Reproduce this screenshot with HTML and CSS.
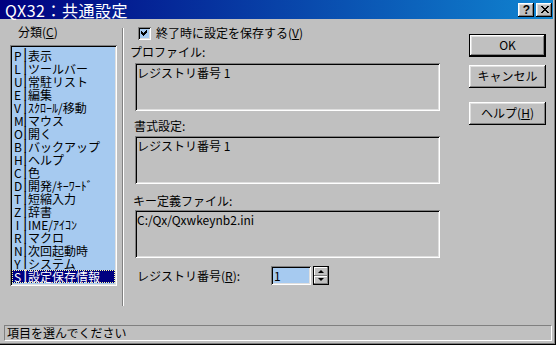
FILE: index.html
```html
<!DOCTYPE html>
<html lang="ja">
<head>
    <meta charset="utf-8">
    <title>QX32：共通設定</title>
    <link rel="stylesheet" href="styles.css">
</head>
<body>
    <div class="window">
        <div class="titlebar">
            <span class="title">QX32：共通設定</span>
            <div class="title-buttons">
                <span class="tbtn help-btn">?</span>
                <span class="tbtn close-btn">
                    <svg width="8" height="7" viewBox="0 0 8 7"><path d="M0 0h2v1h1v1h2v-1h1v-1h2v1h-1v1h-1v1h-1v1h1v1h1v1h1v1h-2v-1h-1v-1h-2v1h-1v1h-2v-1h1v-1h1v-1h1v-1h-1v-1h-1v-1h-1z" fill="#000"/></svg>
                </span>
            </div>
        </div>

        <div class="content">
            <div class="category">
                <div class="cat-label">分類(<u>C</u>)</div>
                <ul class="cat-list">
                    <li><span class="key">P</span><span class="bar">|</span>表示</li>
                    <li><span class="key">L</span><span class="bar">|</span>ツールバー</li>
                    <li><span class="key">U</span><span class="bar">|</span>常駐リスト</li>
                    <li><span class="key">E</span><span class="bar">|</span>編集</li>
                    <li><span class="key">V</span><span class="bar">|</span>ｽｸﾛｰﾙ/移動</li>
                    <li><span class="key">M</span><span class="bar">|</span>マウス</li>
                    <li><span class="key">O</span><span class="bar">|</span>開く</li>
                    <li><span class="key">B</span><span class="bar">|</span>バックアップ</li>
                    <li><span class="key">H</span><span class="bar">|</span>ヘルプ</li>
                    <li><span class="key">C</span><span class="bar">|</span>色</li>
                    <li><span class="key">D</span><span class="bar">|</span>開発/ｷｰﾜｰﾄﾞ</li>
                    <li><span class="key">T</span><span class="bar">|</span>短縮入力</li>
                    <li><span class="key">Z</span><span class="bar">|</span>辞書</li>
                    <li><span class="key">I</span><span class="bar">|</span>IME/ｱｲｺﾝ</li>
                    <li><span class="key">R</span><span class="bar">|</span>マクロ</li>
                    <li><span class="key">N</span><span class="bar">|</span>次回起動時</li>
                    <li><span class="key">Y</span><span class="bar">|</span>システム</li>
                    <li class="selected"><span class="key">S</span><span class="bar">|</span>設定保存情報</li>
                </ul>
            </div>

            <div class="divider"></div>

            <div class="settings">
                <div class="check-row">
                    <span class="checkbox">
                        <svg width="7" height="7" viewBox="0 0 7 7"><path d="M6 0v3h-1v1h-1v1h-1v1h-1v-1h-1v-1h-1v-3h1v1h1v1h1v-1h1v-1h1v-1z" fill="#000"/></svg>
                    </span>
                    <span>終了時に設定を保存する(<u>V</u>)</span>
                </div>

                <div class="field-label first">プロファイル:</div>
                <div class="field">レジストリ番号 1</div>

                <div class="field-label second">書式設定:</div>
                <div class="field">レジストリ番号 1</div>

                <div class="field-label third">キー定義ファイル:</div>
                <div class="field">C:/Qx/Qxwkeynb2.ini</div>

                <div class="registry-row">
                    <span class="registry-label">レジストリ番号(<u>R</u>):</span>
                    <span class="spin-input">1</span>
                    <span class="spin">
                        <span class="spin-btn"><i class="arrow up"></i></span>
                        <span class="spin-btn"><i class="arrow down"></i></span>
                    </span>
                </div>
            </div>

            <div class="actions">
                <div class="button default">OK</div>
                <div class="button">キャンセル</div>
                <div class="button help">ヘルプ(<u>H</u>)</div>
            </div>
        </div>

        <div class="statusbar">項目を選んでください</div>
    </div>
</body>
</html>
```

FILE: styles.css
```css
html, body {
    margin: 0;
    padding: 0;
    background: #c0c0c0;
}

.window {
    width: 556px;
    height: 345px;
    box-sizing: border-box;
    background: #c0c0c0;
    display: flex;
    flex-direction: column;
    overflow: hidden;
    box-shadow: inset -1px -1px #000, inset -2px -2px #808080;
    font-family: "Noto Sans CJK JP", sans-serif;
    font-size: 12px;
    color: #000;
}

.titlebar {
    height: 19px;
    margin-right: 3px;
    background: linear-gradient(to right, #000080, #1084d0);
    display: flex;
    align-items: center;
    justify-content: space-between;
    padding-left: 5px;
    padding-right: 1px;
    flex-shrink: 0;
}

.title {
    color: #fff;
    font-size: 16px;
    line-height: 18px;
    letter-spacing: 0.5px;
}

.title-buttons {
    display: flex;
    gap: 2px;
}

.tbtn {
    width: 16px;
    height: 14px;
    box-sizing: border-box;
    background: #c0c0c0;
    box-shadow: inset -1px -1px #000, inset 1px 1px #fff, inset -2px -2px #808080, inset 2px 2px #dfdfdf;
    display: flex;
    align-items: center;
    justify-content: center;
}

.help-btn {
    font-family: "Liberation Sans", sans-serif;
    font-weight: bold;
    font-size: 12px;
    line-height: 14px;
    padding-left: 1px;
}

.close-btn svg {
    display: block;
    margin-left: 1px;
}

.content {
    flex: 1;
    display: flex;
    align-items: flex-start;
    padding-left: 10px;
}

/* left: category list */
.category {
    width: 107px;
    flex-shrink: 0;
}

.cat-label {
    margin-top: 6px;
    padding-left: 8px;
    line-height: 14px;
    height: 14px;
}

.cat-list {
    list-style: none;
    margin: 6px 0 0;
    padding: 4px 2px 0;
    height: 241px;
    box-sizing: border-box;
    background: #a6caf0;
    box-shadow: inset 1px 1px #808080, inset -1px -1px #fff, inset 2px 2px #000, inset -2px -2px #dfdfdf;
}

.cat-list li {
    height: 13px;
    line-height: 13px;
    display: flex;
    align-items: center;
    white-space: nowrap;
    box-sizing: border-box;
}

.key {
    width: 7px;
    padding-left: 2px;
    text-align: center;
}

.bar {
    width: 6px;
    margin-right: 1px;
    text-align: center;
    font-family: "Liberation Mono", monospace;
    font-size: 14px;
    line-height: 13px;
}

.cat-list li.selected {
    background: #000080;
    color: #fff;
    border: 1px dotted #ffffa0;
}

.cat-list li.selected .key {
    padding-left: 1px;
}

.divider {
    width: 0;
    height: 278px;
    margin: 9px 0 0 5px;
    border-left: 1px solid #808080;
    border-right: 1px solid #fff;
    flex-shrink: 0;
}

/* middle: settings */
.settings {
    width: 310px;
    margin-left: 6px;
    display: flex;
    flex-direction: column;
    flex-shrink: 0;
}

.check-row {
    margin-top: 7px;
    height: 14px;
    line-height: 14px;
    padding-left: 8px;
    display: flex;
    align-items: center;
    gap: 5px;
}

.checkbox {
    width: 13px;
    height: 13px;
    flex-shrink: 0;
    box-sizing: border-box;
    background: #a6caf0;
    box-shadow: inset 1px 1px #808080, inset -1px -1px #fff, inset 2px 2px #000, inset -2px -2px #dfdfdf;
    display: flex;
    align-items: center;
    justify-content: center;
}

.checkbox svg {
    display: block;
}

.field-label {
    line-height: 14px;
    height: 14px;
    padding-left: 2px;
}

.field-label.first {
    margin-top: 5px;
    padding-left: 0;
}

.field-label.second {
    margin-top: 8px;
    padding-left: 4px;
}

.field-label.third {
    margin-top: 10px;
    padding-left: 3px;
}

.field {
    margin-left: 5px;
    height: 48px;
    box-sizing: border-box;
    padding: 3px 2px;
    line-height: 14px;
    box-shadow: inset 1px 1px #808080, inset -1px -1px #fff, inset 2px 2px #000, inset -2px -2px #dfdfdf;
    margin-top: 4px;
}

.field-label.second + .field {
    margin-top: 3px;
}

.field-label.third + .field {
    margin-top: 2px;
}

.registry-row {
    margin-top: 8px;
    display: flex;
    align-items: center;
    height: 19px;
    padding-left: 7px;
}

.registry-label {
    width: 134px;
}

.spin-input {
    width: 40px;
    height: 19px;
    box-sizing: border-box;
    padding: 2px 3px;
    line-height: 15px;
    background: #a6caf0;
    box-shadow: inset 1px 1px #808080, inset -1px -1px #fff, inset 2px 2px #000, inset -2px -2px #dfdfdf;
}

.spin {
    margin-left: 2px;
    width: 16px;
    height: 19px;
    box-sizing: border-box;
    border: 1px solid #000;
    display: flex;
    flex-direction: column;
}

.spin-btn {
    flex: 1;
    background: #c0c0c0;
    box-shadow: inset -1px -1px #808080, inset 1px 1px #fff;
    display: flex;
    align-items: center;
    justify-content: center;
}

.arrow {
    width: 0;
    height: 0;
    border-left: 3px solid transparent;
    border-right: 3px solid transparent;
}

.arrow.up {
    border-bottom: 3px solid #000;
}

.arrow.down {
    border-top: 3px solid #000;
}

/* right: buttons */
.actions {
    margin-left: 29px;
    width: 77px;
    display: flex;
    flex-direction: column;
    padding-top: 15px;
    flex-shrink: 0;
}

.button {
    height: 23px;
    box-sizing: border-box;
    text-align: center;
    line-height: 22px;
    background: #c0c0c0;
    box-shadow: inset -1px -1px #000, inset 1px 1px #fff, inset -2px -2px #808080, inset 2px 2px #dfdfdf;
    margin-bottom: 8px;
}

.button.default {
    border: 1px solid #000;
    line-height: 20px;
}

.button.help {
    margin-top: 6px;
}

.statusbar {
    margin: 0 4px 4px;
    height: 16px;
    box-sizing: border-box;
    border-top: 1px solid #808080;
    border-left: 1px solid #808080;
    border-bottom: 1px solid #fff;
    border-right: 1px solid #fff;
    padding-left: 2px;
    line-height: 14px;
    flex-shrink: 0;
}
```
